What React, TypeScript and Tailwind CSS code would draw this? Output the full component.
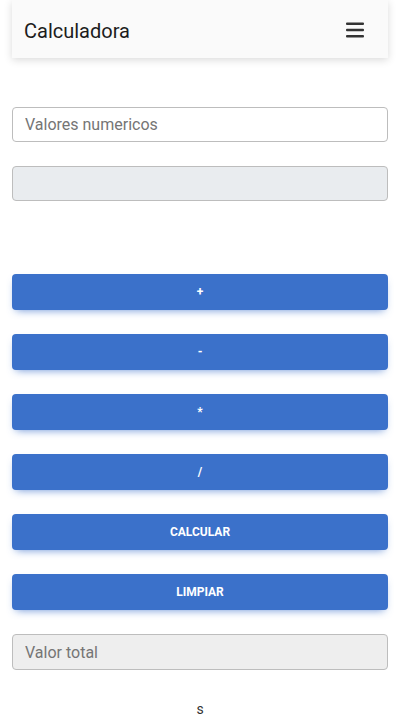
import React from "react";

const ops = ["+", "-", "*", "/", "CALCULAR", "LIMPIAR"];

export default function App() {
  return (
    <div className="min-h-[720px] bg-white font-['Roboto',sans-serif] text-[#212121]">
      {/* Header */}
      <div className="mx-3 h-[58px] bg-[#fafafa] shadow-[0_2px_8px_rgba(0,0,0,0.15)] flex items-center justify-between pl-3 pr-6">
        <span className="text-[20px] leading-none text-[#1d1d1d] pt-[3px]">Calculadora</span>
        <svg width="18" height="16" viewBox="0 0 18 16" className="mt-[1px]">
          <rect x="0" y="0.5" width="18" height="2.5" rx="1" fill="#333" />
          <rect x="0" y="6.75" width="18" height="2.5" rx="1" fill="#333" />
          <rect x="0" y="13" width="18" height="2.5" rx="1" fill="#333" />
        </svg>
      </div>

      <div className="px-3 pt-[49px] flex flex-col">
        <input
          placeholder="Valores numericos"
          className="h-[35px] w-full rounded border border-[#bdbdbd] bg-white px-3 text-[16px] placeholder:text-[#757575] outline-none"
        />
        <input
          disabled
          className="mt-[24px] h-[35px] w-full rounded border border-[#bdbdbd] bg-[#e9ecef] px-3 text-[16px]"
        />

        <div className="mt-[73px] flex flex-col gap-[24px]">
          {ops.map((op) => (
            <button
              key={op}
              className="h-[36px] w-full rounded bg-[#3b71ca] text-white text-[12px] font-bold shadow-[0_4px_9px_-4px_rgba(59,113,202,0.8)]"
            >
              {op}
            </button>
          ))}
        </div>

        <input
          disabled
          placeholder="Valor total"
          className="mt-[24px] h-[36px] w-full rounded border border-[#bdbdbd] bg-[#eeeeee] px-3 text-[16px] placeholder:text-[#757575]"
        />

        <p className="mt-[29px] text-center text-[14px] text-[#333]">s</p>
      </div>
    </div>
  );
}
